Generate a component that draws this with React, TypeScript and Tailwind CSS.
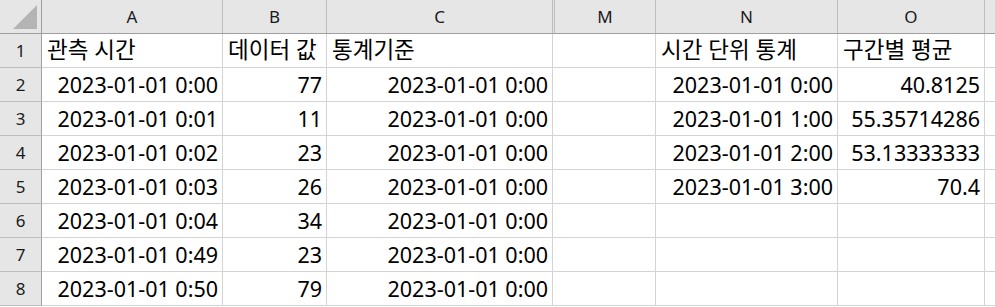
const font = { fontFamily: '"Noto Sans", "Noto Sans CJK KR", sans-serif' };

type Cell = { v: string; align?: "l" | "r" };

const cols = [
  { key: "A", w: "w-[181px]" },
  { key: "B", w: "w-[104px]" },
  { key: "C", w: "w-[226px]" },
  { key: "M", w: "w-[103px]" },
  { key: "N", w: "w-[182px]" },
  { key: "O", w: "w-[147px]" },
];

const rows: Cell[][] = [
  [
    { v: "관측 시간", align: "l" },
    { v: "데이터 값", align: "l" },
    { v: "통계기준", align: "l" },
    { v: "" },
    { v: "시간 단위 통계", align: "l" },
    { v: "구간별 평균", align: "l" },
  ],
  [{ v: "2023-01-01 0:00" }, { v: "77" }, { v: "2023-01-01 0:00" }, { v: "" }, { v: "2023-01-01 0:00" }, { v: "40.8125" }],
  [{ v: "2023-01-01 0:01" }, { v: "11" }, { v: "2023-01-01 0:00" }, { v: "" }, { v: "2023-01-01 1:00" }, { v: "55.35714286" }],
  [{ v: "2023-01-01 0:02" }, { v: "23" }, { v: "2023-01-01 0:00" }, { v: "" }, { v: "2023-01-01 2:00" }, { v: "53.13333333" }],
  [{ v: "2023-01-01 0:03" }, { v: "26" }, { v: "2023-01-01 0:00" }, { v: "" }, { v: "2023-01-01 3:00" }, { v: "70.4" }],
  [{ v: "2023-01-01 0:04" }, { v: "34" }, { v: "2023-01-01 0:00" }, { v: "" }, { v: "" }, { v: "" }],
  [{ v: "2023-01-01 0:49" }, { v: "23" }, { v: "2023-01-01 0:00" }, { v: "" }, { v: "" }, { v: "" }],
  [{ v: "2023-01-01 0:50" }, { v: "79" }, { v: "2023-01-01 0:00" }, { v: "" }, { v: "" }, { v: "" }],
];

function ColHeader() {
  return (
    <div className="flex h-[34px] bg-[#e6e6e6] border-b border-[#9f9f9f] text-[17px] text-[#1a1a1a]">
      <div className="relative w-[42px] shrink-0 border-r border-[#9f9f9f]">
        <svg className="absolute left-[13px] top-[5px]" width="24" height="24" viewBox="0 0 24 24">
          <polygon points="24,0 24,24 0,24" fill="#b4b4b4" />
        </svg>
      </div>
      {cols.map((c) =>
        c.key === "M" ? (
          <div key={c.key} className={`${c.w} shrink-0 pl-px border-r border-[#bdbdbd]`}>
            <div className="h-full flex items-center justify-center border-l border-[#bdbdbd]">{c.key}</div>
          </div>
        ) : (
          <div key={c.key} className={`${c.w} shrink-0 flex items-center justify-center border-r border-[#bdbdbd]`}>
            {c.key}
          </div>
        )
      )}
      <div className="flex-1" />
    </div>
  );
}

export default function App() {
  return (
    <div className="w-[995px] h-[307px] overflow-hidden bg-white text-black" style={font}>
      <ColHeader />
      {rows.map((r, i) => (
        <div key={i} className="flex h-[34px]">
          <div className="w-[42px] shrink-0 flex items-center justify-center bg-[#e6e6e6] border-r border-b border-r-[#9f9f9f] border-b-[#bdbdbd] text-[17px] text-[#1a1a1a]">
            {i + 1}
          </div>
          {r.map((cell, j) => (
            <div
              key={j}
              className={`${cols[j].w} shrink-0 flex items-center whitespace-nowrap border-r border-b border-[#d4d4d4] leading-none ${
                cell.align === "l" ? "justify-start pl-[5px] text-[22.5px]" : "justify-end pr-[4px] text-[21.5px]"
              }`}
            >
              {cell.v}
            </div>
          ))}
          <div className="flex-1 border-b border-[#d4d4d4]" />
        </div>
      ))}
    </div>
  );
}
